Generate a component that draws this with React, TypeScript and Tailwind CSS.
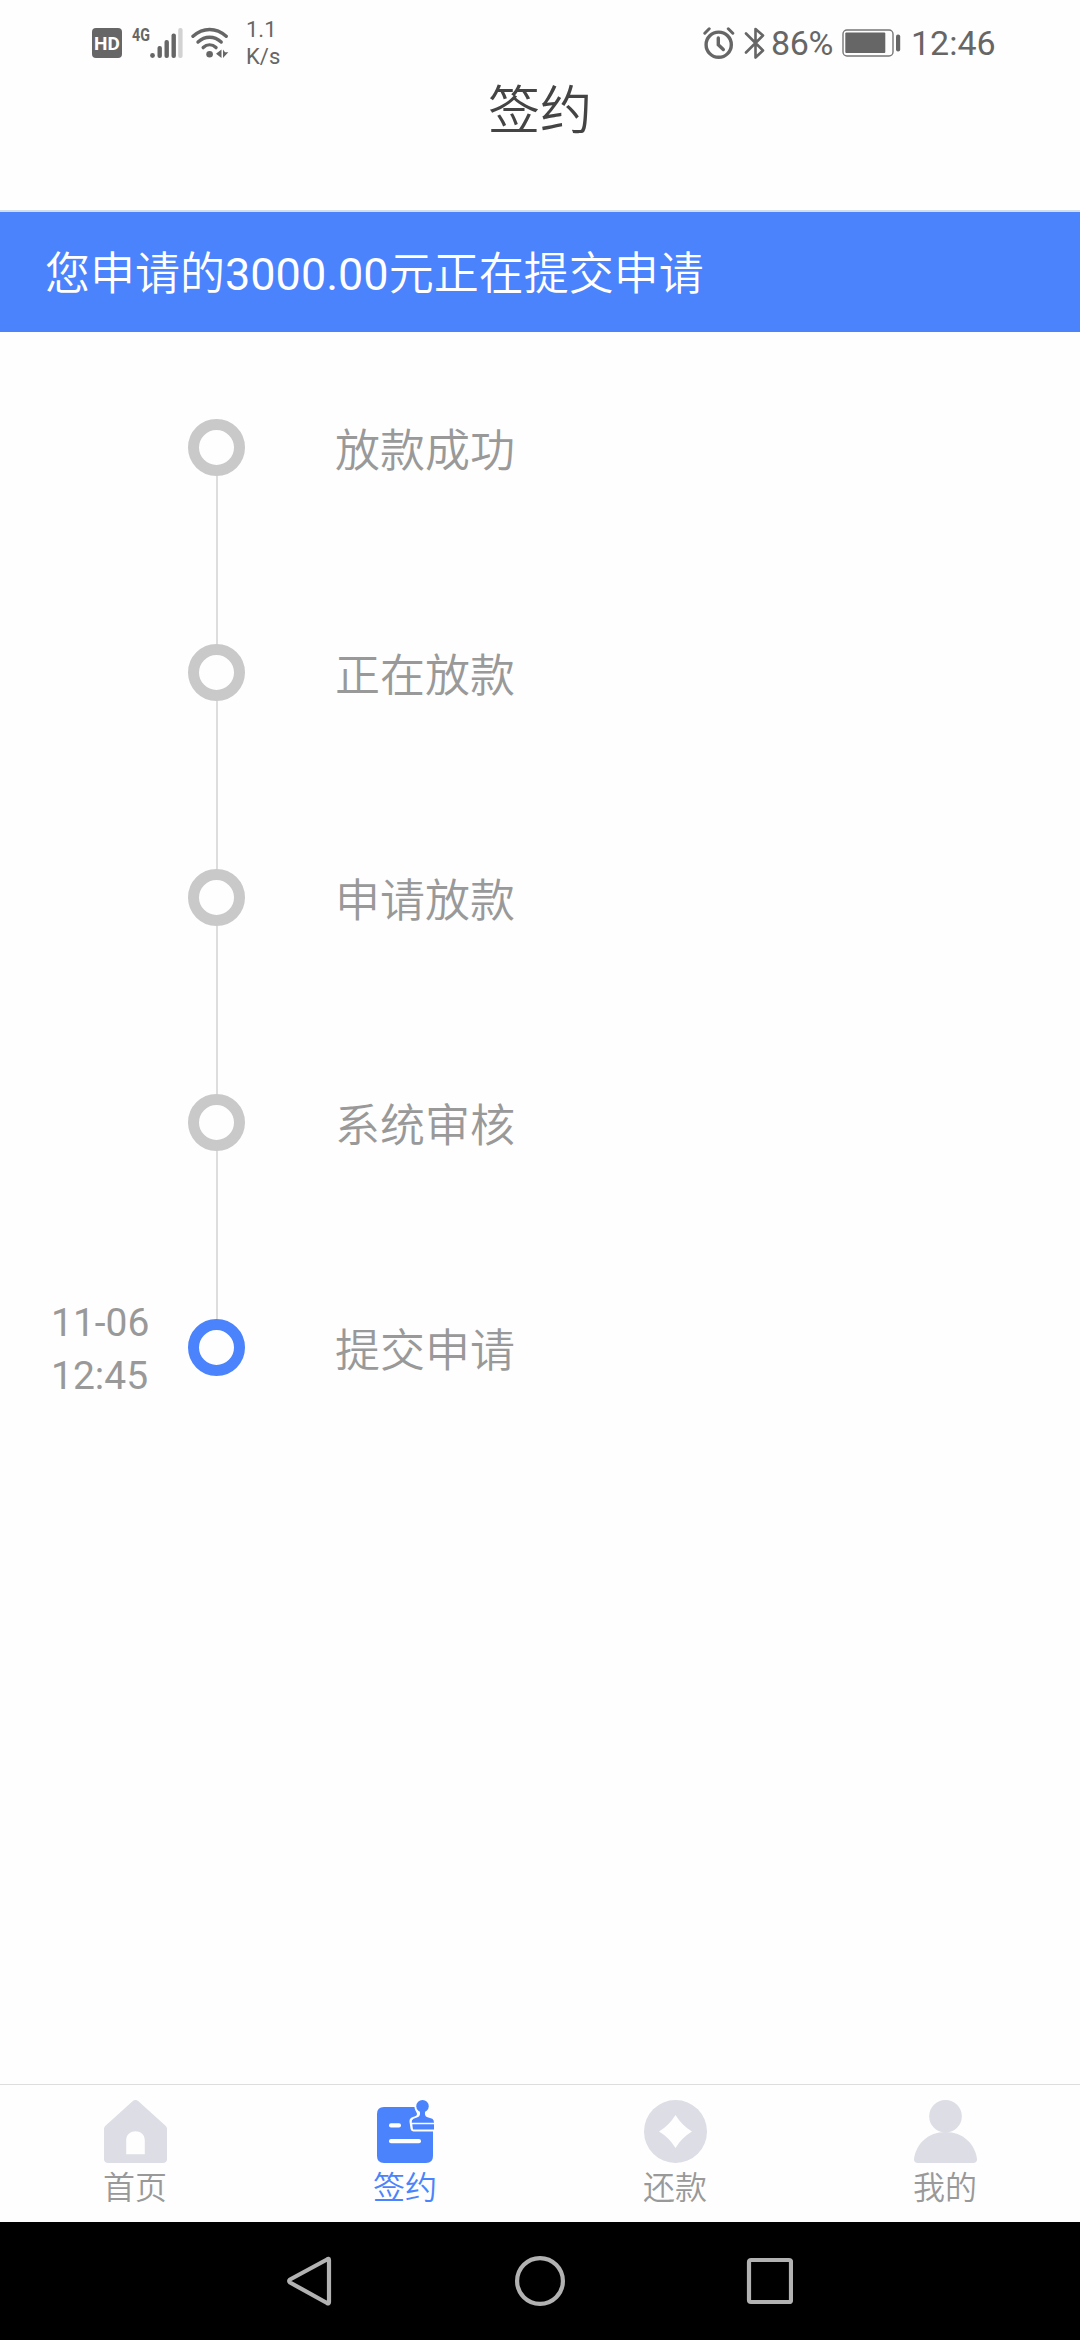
import React from "react";

interface Step {
  id: string;
  label: string;
  date?: string;
  time?: string;
  active?: boolean;
}

interface TabItem {
  id: string;
  label: string;
  icon: React.ReactNode;
  active?: boolean;
}

const steps: Step[] = [
  { id: "success", label: "放款成功" },
  { id: "lending", label: "正在放款" },
  { id: "apply", label: "申请放款" },
  { id: "review", label: "系统审核" },
  { id: "submit", label: "提交申请", date: "11-06", time: "12:45", active: true },
];

const SignalIcon = () => (
  <svg width="33" height="32" viewBox="0 0 33 32" fill="#666">
    <circle cx="2.5" cy="28.5" r="2.4" />
    <rect x="7.5" y="19" width="4.4" height="12" rx="2" />
    <rect x="14.5" y="13" width="4.4" height="18" rx="2" />
    <rect x="21.5" y="6.5" width="4.4" height="24.5" rx="2" />
    <rect x="28.2" y="1" width="4.4" height="30" rx="2" fill="#d2d2d2" />
  </svg>
);

const WifiIcon = () => (
  <svg width="38" height="32" viewBox="0 0 38 32" fill="none" stroke="#666" strokeWidth="3.4" strokeLinecap="round">
    <path d="M2 9.3C12.2 .2 25 .2 35.2 9.3" />
    <path d="M7 15C14 8.6 23.2 8.6 30.2 15" />
    <path d="M12.2 20.6C16 17 21.2 17 25 20.6" />
    <circle cx="18.6" cy="27.3" r="3.3" fill="#666" stroke="none" />
    <path d="M30.5 22.5V31L25 26.8ZM32 22.5V31L37.3 25.2H34Z" fill="#666" stroke="none" />
  </svg>
);

const AlarmIcon = () => (
  <svg width="32" height="34" viewBox="0 0 32 34" fill="none" stroke="#666" strokeWidth="3.4" strokeLinecap="round">
    <circle cx="15.7" cy="18.7" r="12.6" />
    <path d="M15.3 12V18.8L20.3 23.5" />
    <path d="M1.8 7.2L6.2 2.8M25.3 2.8L29.8 7.2" strokeWidth="3" />
  </svg>
);

const BluetoothIcon = () => (
  <svg width="22" height="34" viewBox="0 0 22 34" fill="none" stroke="#666" strokeWidth="2.6" strokeLinecap="round" strokeLinejoin="round">
    <path d="M2 7.5L19 24.5L11.5 31.5V3L19 9.5L2 26.5" />
  </svg>
);

const BatteryIcon = () => (
  <svg width="59" height="28" viewBox="0 0 59 28" fill="#666">
    <rect x="1" y="1" width="50" height="26" rx="4" fill="none" stroke="#777" strokeWidth="1.4" />
    <rect x="3.3" y="3.6" width="40" height="20.4" rx="1" />
    <rect x="54" y="5.5" width="4.2" height="17" rx="2" />
  </svg>
);

const HomeIcon = () => (
  <svg width="63" height="63" viewBox="0 0 63 65" preserveAspectRatio="none" fill="#dcdde5">
    <path
      fillRule="evenodd"
      d="M28.6 1.2Q31.5-1 34.4 1.2L61.5 26.5Q63 28 63 30V60.5Q63 65 58.5 65H4.5Q0 65 0 60.5V30Q0 28 1.5 26.5ZM22.2 56V41.5C22.2 29 40.8 29 40.8 41.5V56Z"
    />
  </svg>
);

const SignIcon = () => (
  <svg width="63" height="63" viewBox="0 0 63 63" fill="#4b83fc">
    <path d="M10 7H52V18H59V56Q59 63 52 63H10Q3 63 3 56V14Q3 7 10 7Z" />
    {/* white gap around the stamp */}
    <path d="M40.500 5C40 10 43 12 43 14C43 15.800 41 16.300 39 17C35.500 18.300 35.300 20 35.700 23L36.600 29Q37 31.400 39.300 31.400H62V0H42Z" fill="#fefefe" />
    <circle cx="48.500" cy="6.200" r="6.200" />
    <path d="M45.300 10H51.700C50.500 13 50.500 16.300 53.500 17.300L58.300 18.800Q60 19.600 60 22.700H37.700Q37.400 19.700 39.500 18.800L43.500 17.300C46.500 16.300 46.500 13 45.300 10Z" />
    <path d="M38.300 24.200H60V29.600H40.200Q39 29.600 38.800 28.400Z" />
    <rect x="15" y="23.300" width="12" height="4.200" rx="2" fill="#fefefe" />
    <rect x="15" y="39" width="32" height="4.200" rx="2" fill="#fefefe" />
  </svg>
);

const RepayIcon = () => (
  <svg width="63" height="63" viewBox="0 0 63 63">
    <circle cx="31.5" cy="31.5" r="31.5" fill="#dcdde5" />
    <path d="M31.5 15Q38 25.5 48 31.5Q38 37.5 31.5 48Q25 37.5 15 31.5Q25 25.5 31.5 15Z" fill="#fefefe" />
  </svg>
);

const MineIcon = () => (
  <svg width="63" height="63" viewBox="0 0 63 63" fill="#dcdde5">
    <circle cx="31.5" cy="16.3" r="16.3" />
    <path d="M0 59C2 44 14 32 31.5 32S61 44 63 59Q63 63 59 63H4Q0 63 0 59Z" />
  </svg>
);

const tabs: TabItem[] = [
  { id: "home", label: "首页", icon: <HomeIcon /> },
  { id: "sign", label: "签约", icon: <SignIcon />, active: true },
  { id: "repay", label: "还款", icon: <RepayIcon /> },
  { id: "mine", label: "我的", icon: <MineIcon /> },
];

const StatusBar = () => (
  <div className="flex h-[84px] items-center justify-between pr-[86px] pl-[92px] text-[#666]">
    <div className="flex items-center pt-[2px]">
      <span className="flex h-[30px] w-[30px] items-center justify-center rounded-[4px] bg-[#666] text-[19px] leading-none font-bold text-white">
        HD
      </span>
      <span className="ml-[10px] h-[32px] w-[18px] origin-left scale-x-[0.75] text-[19px] leading-[16px] font-bold">4G</span>
      <SignalIcon />
      <span className="ml-[8px]">
        <WifiIcon />
      </span>
      <span className="ml-[17px] text-[22px] leading-[27px] font-[380]">
        1.1
        <br />
        K/s
      </span>
    </div>
    <div className="flex items-center pt-px text-[34px] leading-none font-[380]">
      <AlarmIcon />
      <span className="ml-[9px]">
        <BluetoothIcon />
      </span>
      <span className="ml-[5px] w-[62px] tracking-[-0.4px]">86%</span>
      <span className="ml-[9px]">
        <BatteryIcon />
      </span>
      <span className="ml-[10px] w-[83px]">12:46</span>
    </div>
  </div>
);

const StepRow = ({ step, last }: { step: Step; last: boolean }) => (
  <li className={last ? "flex h-[57px]" : "flex h-[225px]"}>
    <div className="flex h-[61px] w-[188px] shrink-0 flex-col justify-center pl-[51px] text-[39px] leading-[53px] text-[#999]">
      {step.date && <span>{step.date}</span>}
      {step.time && <span>{step.time}</span>}
    </div>
    <div className="flex w-[57px] shrink-0 flex-col items-center">
      <span
        className={
          step.active
            ? "h-[57px] w-[57px] shrink-0 rounded-full border-[11px] border-[#4b83fc]"
            : "h-[57px] w-[57px] shrink-0 rounded-full border-[11px] border-[#c9c9c9]"
        }
      />
      {!last && <span className="w-[2px] flex-1 bg-[#ddd]" />}
    </div>
    <span className="ml-[90px] h-[65px] text-[45px] leading-[65px] font-[350] text-[#999]">{step.label}</span>
  </li>
);

const NavigationBar = () => (
  <div className="flex h-[118px] items-center justify-center bg-black">
    <svg width="506" height="52" viewBox="0 0 506 52" fill="none" stroke="#b2b2b2" strokeWidth="4.2" strokeLinejoin="round">
      <path d="M40 4.5Q42 3 42 5V47Q42 49 40 48L3 27.5Q1.5 26 3 24.5Z" />
      <circle cx="253" cy="26" r="22.9" />
      <rect x="462" y="5" width="42" height="42" rx="2" />
    </svg>
  </div>
);

const App: React.FC = () => {
  return (
    <div className="flex h-[2340px] w-[1080px] flex-col overflow-hidden bg-[#fefefe] font-['Roboto','Noto_Sans_CJK_SC',sans-serif]">
      <StatusBar />
      <header className="h-[128px] border-b-2 border-[#d3deeb] text-center text-[52px] leading-[55px] font-[350] text-[#444]">
        签约
      </header>
      <div className="h-[120px] bg-[#4b83fc] px-[45px] text-[45px] leading-[126px] font-[350] text-white">
        您申请的<span className="font-[380]">3000.00</span>元正在提交申请
      </div>
      <ul className="flex-1 pt-[87px]">
        {steps.map((step, index) => (
          <StepRow key={step.id} step={step} last={index === steps.length - 1} />
        ))}
      </ul>
      {/* Tabs */}
      <nav className="grid h-[138px] grid-cols-4 border-t border-[#ddd]">
        {tabs.map((tab) => (
          <div
            key={tab.id}
            className={
              tab.active
                ? "flex flex-col items-center pt-[15px] text-[#4b83fc]"
                : "flex flex-col items-center pt-[15px] text-[#999]"
            }
          >
            {tab.icon}
            <span className="mt-[4px] text-[32px] leading-[42px] font-[350]">{tab.label}</span>
          </div>
        ))}
      </nav>
      <NavigationBar />
    </div>
  );
};

export default App;
